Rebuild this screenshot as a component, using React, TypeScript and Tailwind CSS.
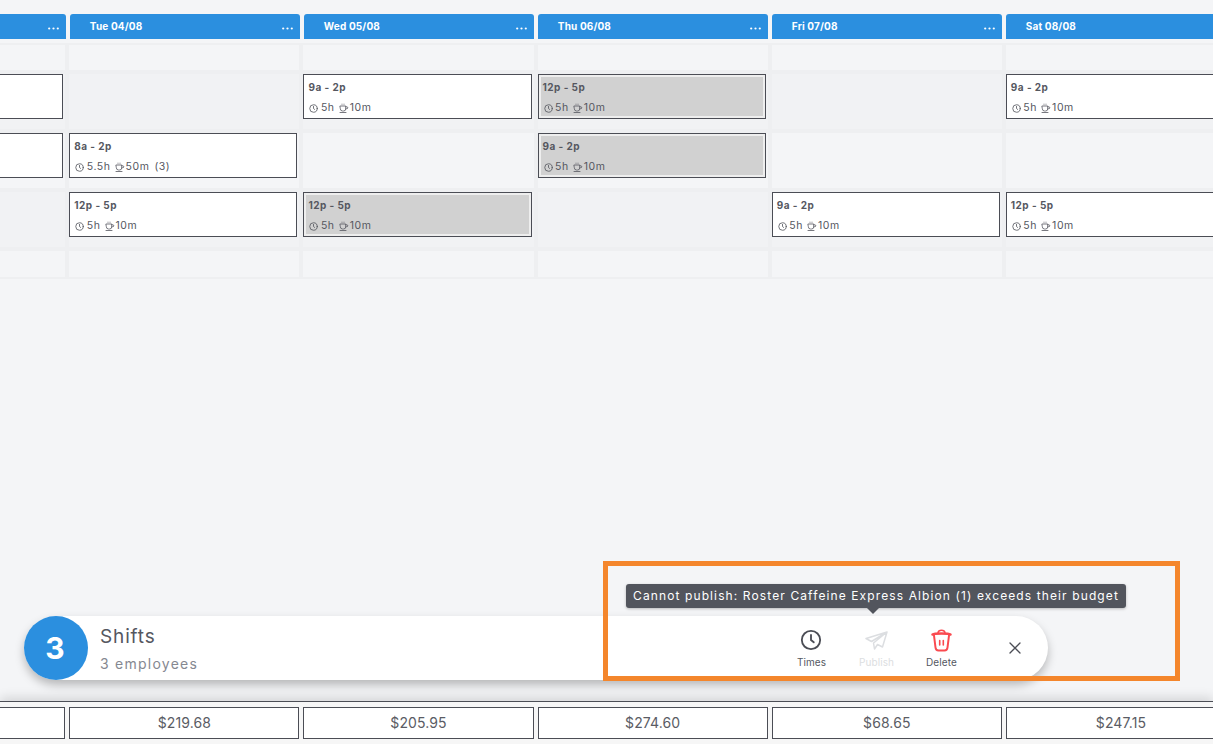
import React from "react";

const font = { fontFamily: '"Inter", "Noto Sans", sans-serif' };

type Shift = { t: string; h: string; b: string; extra?: string; sel?: boolean };

const days = ["", "Tue 04/08", "Wed 05/08", "Thu 06/08", "Fri 07/08", "Sat 08/08"];
const amounts = ["", "$219.68", "$205.95", "$274.60", "$68.65", "$247.15"];

const mk = (t: string, h = "5h", b = "10m", sel = false, extra?: string): Shift => ({ t, h, b, sel, extra });
const hidden: Shift = { t: "", h: "", b: "" };

const rows: (Shift | null)[][] = [
  [null, null, null, null, null, null],
  [hidden, null, mk("9a - 2p"), mk("12p - 5p", "5h", "10m", true), null, mk("9a - 2p")],
  [hidden, mk("8a - 2p", "5.5h", "50m", false, "(3)"), null, mk("9a - 2p", "5h", "10m", true), null, null],
  [null, mk("12p - 5p"), mk("12p - 5p", "5h", "10m", true), null, mk("9a - 2p"), mk("12p - 5p")],
  [null, null, null, null, null, null],
];

function Clock({ size = 9, sw = 2.2 }: { size?: number; sw?: number }) {
  return (
    <svg width={size} height={size} viewBox="0 0 24 24" fill="none" stroke="currentColor" strokeWidth={sw} strokeLinecap="round" className="shrink-0">
      <circle cx="12" cy="12" r="10" />
      <path d="M12 6.5V12l3 2.5" />
    </svg>
  );
}

function Cup() {
  return (
    <svg width="10" height="10" viewBox="0 0 20 20" fill="none" stroke="currentColor" strokeWidth={1.6} strokeLinecap="round" className="shrink-0">
      <path d="M2.5 6h11v5.5a4.5 4.5 0 0 1-4.5 4.5H7a4.5 4.5 0 0 1-4.5-4.5z" />
      <path d="M13.5 7.5h2a2 2 0 0 1 2 2 2 2 0 0 1-2 2h-2" />
      <path d="M6 3.5V2M10 3.5V2" strokeWidth={1.1} />
      <path d="M2 19h12" />
    </svg>
  );
}

function Card({ s }: { s: Shift }) {
  const body = s.t ? (
    <>
      <div className="text-[10px] font-bold leading-[12px] tracking-[0.45px] text-[#55575f]">{s.t}</div>
      <div className="mt-[8px] flex items-center pt-[1px] text-[10.5px] leading-[12px] tracking-[0.55px] text-[#55575f]">
        <span className="ml-[1px]"><Clock /></span>
        <span className="ml-[2.5px]">{s.h}</span>
        <span className="ml-[4px]"><Cup /></span>
        <span className="ml-[1px]">{s.b}</span>
        {s.extra ? <span className="ml-[5px]">{s.extra}</span> : null}
      </div>
    </>
  ) : null;
  if (s.sel) {
    return (
      <div className="mr-[2px] h-[45px] border border-[#4b4d55] bg-[#eeeeee] p-[2px]">
        <div className="h-full bg-[#d1d1d1] pl-[2px] pt-[4px]">{body}</div>
      </div>
    );
  }
  return <div className="mr-[2px] h-[45px] border border-[#4b4d55] bg-white pl-[4px] pt-[6px]">{body}</div>;
}

function PlaneIcon() {
  return (
    <svg width="23" height="19" viewBox="0 0 23 19" fill="none" stroke="#dcdee1" strokeWidth={1.5} strokeLinejoin="round">
      <path d="M22 1 1 7.5 6.5 10.5 22 1 8.5 12 9.5 18 12.5 13.5 17.5 16z" />
    </svg>
  );
}

function TrashIcon() {
  return (
    <svg width="21" height="23" viewBox="0 0 21 23" fill="none" stroke="#fa4a50" strokeWidth={2} strokeLinecap="round" strokeLinejoin="round">
      <path d="M1.5 5.5c2-1.4 16-1.4 18 0" strokeWidth={2.4} />
      <path d="M7 3.8C7.3 2 8.5 1.2 10.5 1.2s3.2.8 3.5 2.6" strokeWidth={1.6} />
      <path d="M3 6.5l1.5 12c.2 1.9 1.3 3 3 3h6c1.7 0 2.8-1.1 3-3l1.5-12" />
      <path d="M8.7 11.5v4.5M12.3 11.5v4.5" strokeWidth={1.6} />
    </svg>
  );
}

function Action({ icon, label, muted }: { icon: React.ReactNode; label: string; muted?: boolean }) {
  return (
    <div className="flex w-[65px] flex-col items-center">
      <div className="flex h-[24px] items-center justify-center">{icon}</div>
      <div className={`mt-[4px] text-[10px] leading-[12px] tracking-[0.1px] ${muted ? "text-[#dcdee1]" : "text-[#55575f]"}`}>{label}</div>
    </div>
  );
}

export default function App() {
  return (
    <div className="relative flex h-[744px] w-[1213px] flex-col overflow-hidden bg-[#f4f5f7]" style={font}>
      <main className="min-h-0 flex-1 overflow-hidden pt-[14px]">
        <div className="-ml-[164.2px] grid w-max grid-cols-[repeat(6,230px)] gap-x-[4px]">
          {days.map((d, i) => (
            <div key={i} className="flex h-[25px] items-center justify-between rounded-t-[3px] bg-[#2b8fdf] pl-[20px] pr-[7px] text-white">
              <span className="text-[10px] font-bold tracking-[0.15px]">{d}</span>
              <svg width="11" height="3" viewBox="0 0 11 3" fill="white" className="mt-[4px]">
                <circle cx="1.2" cy="1.5" r="1.1" />
                <circle cx="5.5" cy="1.5" r="1.1" />
                <circle cx="9.8" cy="1.5" r="1.1" />
              </svg>
            </div>
          ))}
        </div>
        <div className="mt-[4px] -ml-[164.85px] w-[1400px] bg-[#eeeff1] py-[2px]">
          <div className="grid grid-cols-[repeat(6,230.15px)] grid-rows-[25px_55px_55px_55px_26px] gap-x-[4px] gap-y-[4px]">
            {rows.map((row, r) =>
              row.map((s, c) => (
                <div key={`${r}-${c}`} className={r === 1 || r === 3 ? "bg-[#f1f2f4]" : "bg-[#f4f5f7]"}>
                  {s ? <Card s={s} /> : null}
                </div>
              ))
            )}
          </div>
        </div>
      </main>

      <footer className="h-[43px] shrink-0 border-t border-[#4b4d55] bg-[#f6f6f6] pt-[5px] shadow-[0_-4px_10px_rgba(0,0,0,0.12)]">
        <div className="-ml-[164.85px] grid w-max grid-cols-[repeat(6,230.15px)] gap-x-[4px]">
          {amounts.map((a, i) => (
            <div key={i} className="flex h-[32px] items-center justify-center border border-[#4b4d55] bg-white pb-[2px] text-[14px] tracking-[0.1px] text-[#5a5c64]">
              {a}
            </div>
          ))}
        </div>
      </footer>

      <div className="absolute left-[24px] top-[616px] flex h-[64px] w-[1024px] items-center rounded-full bg-white shadow-[0_5px_10px_rgba(0,0,0,0.25)]">
        <div className="flex h-[64px] w-[64px] shrink-0 items-center justify-center rounded-full bg-[#2b8fdf] pr-[2px] text-[30px] font-bold text-white">3</div>
        <div className="ml-[12px] pt-[2px]">
          <div className="text-[19px] leading-[24px] tracking-[0.85px] text-[#55575f]">Shifts</div>
          <div className="mt-[6px] text-[14px] leading-[18px] tracking-[1.25px] text-[#858891]">3 employees</div>
        </div>
        <div className="ml-auto flex items-center pr-[27px]">
          <Action icon={<span className="-ml-[2px] text-[#4b4d55]"><Clock size={22} sw={2} /></span>} label="Times" />
          <Action icon={<PlaneIcon />} label="Publish" muted />
          <Action icon={<TrashIcon />} label="Delete" />
          <svg width="12" height="12" viewBox="0 0 12 12" fill="none" stroke="#4b4d55" strokeWidth={1.3} strokeLinecap="round" className="ml-[35px]">
            <path d="M1 1l10 10M11 1 1 11" />
          </svg>
        </div>
      </div>

      <div className="absolute left-[626px] top-[584px] flex h-[24px] w-[500px] items-center justify-center rounded-[3px] bg-[#52555d] text-[12px] tracking-[1.11px] text-white shadow-[0_1px_3px_rgba(0,0,0,0.25)]">
        Cannot publish: Roster Caffeine Express Albion (1) exceeds their budget
        <span className="absolute left-[241px] top-[24px] h-0 w-0 border-x-[6px] border-t-[6px] border-x-transparent border-t-[#52555d]" />
      </div>

      <div className="pointer-events-none absolute left-[603px] top-[561px] h-[120px] w-[577px] border-[5px] border-[#f4862c]" />
    </div>
  );
}
